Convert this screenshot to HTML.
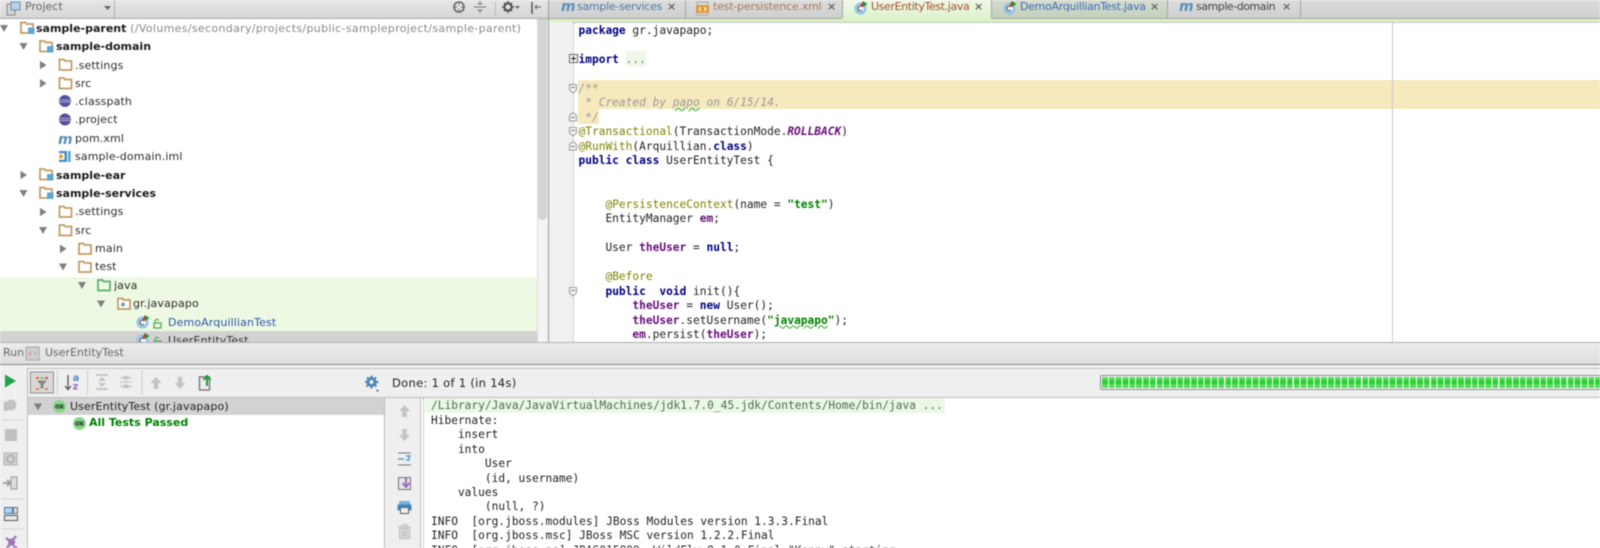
<!DOCTYPE html>
<html><head><meta charset="utf-8"><title>UserEntityTest</title>
<style>
html,body{margin:0;padding:0;background:#fff}
#r{position:relative;width:1600px;height:548px;overflow:hidden;background:#fff;filter:blur(.4px)}
#r div{position:absolute}
.t{position:absolute;white-space:pre;font:11px/18px "DejaVu Sans",sans-serif;color:#2c2c2c;letter-spacing:.12px}
.b{font-weight:bold;color:#1a1a1a;letter-spacing:0}
.g{color:#888;letter-spacing:.33px;font-weight:normal}
.x{color:#666;font-weight:bold}
.c{position:absolute;white-space:pre;font:11.2px/15px "DejaVu Sans Mono","Liberation Mono",monospace;color:#222;left:578.5px}
.k{color:#000080;font-weight:bold}
.a{color:#808000}
.f{color:#660e7a;font-weight:bold}
.s{color:#008000;font-weight:bold}
.m{color:#999;font-style:italic}
.w{text-decoration:underline wavy #2da52d .7px}
.o{position:absolute;white-space:pre;font:11.2px/15px "DejaVu Sans Mono","Liberation Mono",monospace;color:#222;left:431px}
svg{position:absolute;left:0;top:0}
</style></head><body>
<div id="r">
<!-- top bars -->
<div style="left:0;top:0;width:548px;height:18px;background:linear-gradient(#e6e6e6,#d6d6d6);border-bottom:1px solid #aaa"></div>
<div style="left:548px;top:0;width:1052px;height:18px;background:linear-gradient(#dcdcdc,#cfcfcf);border-bottom:1px solid #a8a8a8"></div>
<div style="left:842px;top:0;width:149px;height:19px;background:linear-gradient(#f0f8e8,#ddf2cc)"></div>
<div style="left:991px;top:0;width:176px;height:18px;background:linear-gradient(#d5dccf,#c4d0bc)"></div>
<div style="left:548px;top:19px;width:1052px;height:3px;background:#d8f2c4;border-bottom:1px solid #c8c8c8"></div>
<div style="left:114px;top:0;width:1px;height:18px;background:#b0b0b0"></div>
<div style="left:495px;top:2px;width:1px;height:14px;background:#bbb"></div>
<div style="left:548px;top:0;width:1px;height:18px;background:#999"></div>
<div style="left:685px;top:0;width:1px;height:18px;background:#a5a5a5"></div>
<div style="left:842px;top:0;width:1px;height:18px;background:#a5a5a5"></div>
<div style="left:991px;top:0;width:1px;height:18px;background:#a5a5a5"></div>
<div style="left:1167px;top:0;width:1px;height:18px;background:#a5a5a5"></div>
<div style="left:1300px;top:0;width:1px;height:18px;background:#a5a5a5"></div>

<span class="t" style="left:25px;top:-2px;color:#666;letter-spacing:0">Project</span>
<span class="t" style="left:577px;top:-2px;color:#4f78a8;letter-spacing:-.27px">sample-services</span>
<span class="t x" style="left:667px;top:-2px">×</span>
<span class="t" style="left:713px;top:-2px;color:#a87a5a;letter-spacing:-.2px">test-persistence.xml</span>
<span class="t x" style="left:827px;top:-2px">×</span>
<span class="t" style="left:871px;top:-2px;color:#a0522d;letter-spacing:-.37px">UserEntityTest.java</span>
<span class="t x" style="left:974px;top:-2px">×</span>
<span class="t" style="left:1020px;top:-2px;color:#3d6cb8;letter-spacing:-.3px">DemoArquillianTest.java</span>
<span class="t x" style="left:1150px;top:-2px">×</span>
<span class="t" style="left:1196px;top:-2px;color:#444;letter-spacing:-.46px">sample-domain</span>
<span class="t x" style="left:1282px;top:-2px">×</span>

<!-- tree -->
<div style="left:0;top:276.5px;width:537px;height:54px;background:#eef9e3"></div>
<div style="left:0;top:330.5px;width:537px;height:12px;background:#d2d2d2"></div>
<span class="t b" style="left:36px;top:20px">sample-parent <span class="g">(/Volumes/secondary/projects/public-sampleproject/sample-parent)</span></span>
<span class="t b" style="left:56px;top:38px">sample-domain</span>
<span class="t" style="left:75px;top:57px">.settings</span>
<span class="t" style="left:75px;top:75px">src</span>
<span class="t" style="left:75px;top:93px">.classpath</span>
<span class="t" style="left:75px;top:111px">.project</span>
<span class="t" style="left:75px;top:130px">pom.xml</span>
<span class="t" style="left:75px;top:148px">sample-domain.iml</span>
<span class="t b" style="left:56px;top:167px">sample-ear</span>
<span class="t b" style="left:56px;top:185px">sample-services</span>
<span class="t" style="left:75px;top:203px">.settings</span>
<span class="t" style="left:75px;top:222px">src</span>
<span class="t" style="left:95px;top:240px">main</span>
<span class="t" style="left:95px;top:258px">test</span>
<span class="t" style="left:114px;top:277px">java</span>
<span class="t" style="left:133px;top:295px">gr.javapapo</span>
<span class="t" style="left:168px;top:314px;color:#2a56b0">DemoArquillianTest</span>
<div style="left:0;top:330.5px;width:537px;height:12px;overflow:hidden"><span class="t" style="left:168px;top:1.5px;color:#333">UserEntityTest</span></div>

<!-- left scrollbar and gutter -->
<div style="left:537px;top:19px;width:11px;height:323px;background:#f4f4f4;border-left:1px solid #ddd;box-sizing:border-box"></div>
<div style="left:538px;top:19px;width:9px;height:201px;background:#d4d4d4;border-radius:0 0 4px 4px"></div>
<div style="left:548px;top:19px;width:1px;height:323px;background:#999"></div>
<div style="left:549px;top:22px;width:24px;height:320px;background:#f0f0f0"></div>
<div style="left:573px;top:22px;width:0;height:320px;border-left:1px dotted #aaa"></div>
<!-- editor -->
<div style="left:578px;top:80px;width:1022px;height:29px;background:#f5e9bd"></div>
<div style="left:578px;top:109px;width:21px;height:15px;background:#f5e9bd"></div>
<div style="left:626px;top:51px;width:20px;height:15px;background:#edf8e6"></div>
<div style="left:1392px;top:22px;width:1px;height:320px;background:#c8c8c8"></div>
<div style="left:642px;top:298px;width:1px;height:44px;background:#e4e4e4"></div>

<span class="c" style="top:22.5px"><span class="k">package</span> gr.javapapo;</span>
<span class="c" style="top:51.5px"><span class="k">import</span> <span style="color:#777">...</span></span>
<span class="c m" style="top:80.5px">/**</span>
<span class="c m" style="top:95px"> * Created by <span class="w">papo</span> on 6/15/14.</span>
<span class="c m" style="top:109.5px"> */</span>
<span class="c" style="top:124px"><span class="a">@Transactional</span>(TransactionMode.<i class="f">ROLLBACK</i>)</span>
<span class="c" style="top:138.5px"><span class="a">@RunWith</span>(Arquillian.<span class="k">class</span>)</span>
<span class="c" style="top:153px"><span class="k">public class</span> UserEntityTest {</span>
<span class="c" style="top:196.7px">    <span class="a">@PersistenceContext</span>(name = <span class="s">"test"</span>)</span>
<span class="c" style="top:211.2px">    EntityManager <span class="f">em</span>;</span>
<span class="c" style="top:240.2px">    User <span class="f">theUser</span> = <span class="k">null</span>;</span>
<span class="c" style="top:269.2px">    <span class="a">@Before</span></span>
<span class="c" style="top:283.7px">    <span class="k">public</span>  <span class="k">void</span> init(){</span>
<span class="c" style="top:298.2px">        <span class="f">theUser</span> = <span class="k">new</span> User();</span>
<span class="c" style="top:312.7px">        <span class="f">theUser</span>.setUsername(<span class="s">"<span class="w">javapapo</span>"</span>);</span>
<div style="left:549px;top:325px;width:1051px;height:17px;overflow:hidden;background:transparent"><span class="c" style="left:29.5px;top:2.2px">        <span class="f">em</span>.persist(<span class="f">theUser</span>);</span></div>

<!-- run panel -->
<div style="left:0;top:342px;width:1600px;height:22px;background:linear-gradient(#ececec,#dedede);border-top:1px solid #b0b0b0;box-sizing:border-box"></div>
<div style="left:0;top:364px;width:1600px;height:1px;background:#888"></div>
<div style="left:0;top:365px;width:1600px;height:183px;background:#efefef"></div>
<div style="left:27px;top:368px;width:1573px;height:1px;background:#c4c4c4"></div>
<div style="left:27px;top:368px;width:1px;height:180px;background:#bdbdbd"></div>
<span class="t" style="left:3px;top:344px;color:#666;letter-spacing:0">Run</span>
<span class="t" style="left:45px;top:344px;color:#666;letter-spacing:0">UserEntityTest</span>
<span class="t" style="left:392px;top:374px;color:#222;font-size:11.5px;letter-spacing:.3px">Done: 1 of 1 (in 14s)</span>

<div style="left:28px;top:397px;width:356px;height:151px;background:#fff"></div>
<div style="left:28px;top:397px;width:356px;height:18px;background:#d2d2d2"></div>
<div style="left:28px;top:397px;width:1572px;height:1px;background:#bdbdbd"></div>
<div style="left:384px;top:397px;width:1px;height:151px;background:#bbb"></div>
<div style="left:420px;top:398px;width:1180px;height:150px;background:#fff;border-left:1px solid #bbb;box-sizing:border-box"></div>
<div style="left:423px;top:398px;width:0;height:150px;border-left:1px dotted #999"></div>
<div style="left:425px;top:398px;width:520px;height:14.5px;background:#ecf8e6"></div>
<span class="t" style="left:70px;top:398px;color:#222">UserEntityTest (gr.javapapo)</span>
<span class="t b" style="left:89px;top:414px;color:#008000">All Tests Passed</span>

<span class="o" style="top:398.2px;color:#4e6e4e">/Library/Java/JavaVirtualMachines/jdk1.7.0_45.jdk/Contents/Home/bin/java ...</span>
<span class="o" style="top:412.7px">Hibernate:</span>
<span class="o" style="top:427.1px">    insert</span>
<span class="o" style="top:441.6px">    into</span>
<span class="o" style="top:456px">        User</span>
<span class="o" style="top:470.5px">        (id, username)</span>
<span class="o" style="top:484.9px">    values</span>
<span class="o" style="top:499.4px">        (null, ?)</span>
<span class="o" style="top:513.8px">INFO  [org.jboss.modules] JBoss Modules version 1.3.3.Final</span>
<span class="o" style="top:528.3px">INFO  [org.jboss.msc] JBoss MSC version 1.2.2.Final</span>
<span class="o" style="top:542.7px">INFO  [org.jboss.as] JBAS015899: WildFly 8.1.0.Final "Kenny" starting</span>

<!-- progress -->
<div style="left:1100px;top:375px;width:500px;height:15px;border:1px solid #888;border-right:0;box-sizing:border-box;background:#fff;border-radius:2px 0 0 2px"></div>
<div style="left:1102px;top:377px;width:498px;height:11px;background:repeating-linear-gradient(90deg,#55da5a 0,#55da5a 5.8px,#fff 5.8px,#fff 6.85px)"></div>
<div style="left:1102px;top:380px;width:498px;height:4px;background:repeating-linear-gradient(90deg,#2ad034 0,#2ad034 5.8px,#fff 5.8px,#fff 6.85px)"></div>

<svg width="1600" height="548" viewBox="0 0 1600 548">
<defs>
<g id="down"><path d="M-4-3.500h8L0 3.500z" fill="#808080"/></g>
<g id="right"><path d="M-3-4.300v8.600L3.500 0z" fill="#808080"/></g>
<g id="fo"><path d="M1 1.500h4.500l1 1.500H13V12H1z" fill="#fff" stroke="#c09a62" stroke-width="1.700"/></g>
<g id="mod"><path d="M1 1.500h4.500l1 1.500H13V12H1z" fill="#fff" stroke="#c09a62" stroke-width="1.700"/><rect x="8" y="6.500" width="6.500" height="6.500" fill="#5fa6d2"/></g>
<g id="ecl"><circle cx="6.500" cy="6.500" r="6" fill="#56519a"/><path d="M0 5.500h13M0 7.500h13" stroke="#c8d0f4" stroke-width=".8"/></g>
<g id="cls"><circle cx="6.500" cy="7.500" r="6" fill="#8ec4e8"/><circle cx="6.500" cy="7.500" r="3.600" fill="#e8f4fb"/><path d="M8 5.800a2.400 2.400 0 1 0 0 3.400" fill="none" stroke="#333" stroke-width="1"/><path d="M9 0v6l-3-1z" fill="#d33"/><path d="M9 0l4.500 3L9 6z" fill="#1a9a2a"/></g>
<g id="lock"><rect x="1" y="4" width="7" height="5" fill="none" stroke="#55a85a" stroke-width="1.300"/><path d="M2 4V2.200a2 2 0 0 1 3.800-.6" fill="none" stroke="#55a85a" stroke-width="1.200"/></g>
<g id="ok"><circle cx="6.500" cy="6.500" r="6.500" fill="#8bd68d"/><ellipse cx="6.500" cy="6.500" rx="4.800" ry="3" fill="#74b878"/><text x="6.500" y="8.500" text-anchor="middle" font-family="DejaVu Sans,sans-serif" font-weight="bold" font-size="5.500" fill="#1f3f22">OK</text></g>
<g id="mm"><text x="0" y="12" font-family="DejaVu Sans,sans-serif" font-style="italic" font-weight="bold" font-size="14" fill="#5c8fb4">m</text></g>
<g id="fold"><path d="M0.500 0.500h7v5.500l-3.500 3-3.500-3z" fill="#f4f4f4" stroke="#999"/><path d="M2 3.500h4" stroke="#777"/></g>
<g id="foldb"><path d="M4 0.500l3.500 3v5.500h-7V3.500z" fill="#f4f4f4" stroke="#999"/><path d="M2 5.500h4" stroke="#777"/></g>
<g id="upa"><path d="M0-6l5.500 6H2.200v6h-4.400V0H-5.500z" fill="#c4c4c4"/></g>
<g id="dna"><path d="M0 6l5.500-6H2.200v-6h-4.400v6H-5.500z" fill="#c4c4c4"/></g>
</defs>

<!-- top bar icons -->
<rect x="7" y="4" width="8" height="11" fill="#d4d4d4" stroke="#888"/><rect x="11" y="2" width="9" height="8" fill="#bcd0e4" stroke="#6d8aa8"/>
<path d="M104 6h7l-3.500 4z" fill="#666"/>
<circle cx="459" cy="7" r="5" fill="none" stroke="#666" stroke-width="1.600"/><path d="M459 2v3M459 9v3M454 7h3M461 7h3" stroke="#666"/>
<path d="M474 7h12M480 1v3.500M480 13V9.500M477.500 4h5M477.500 10h5" stroke="#777" stroke-width="1.100"/>
<circle cx="508" cy="7" r="3.600" fill="none" stroke="#555" stroke-width="2.200"/><path d="M508 1v2M508 11v2M502 7h2M512 7h2M504 3l1 1M511 10l1 1M512 3l-1 1M505 10l-1 1" stroke="#555" stroke-width="1.600"/>
<path d="M515 6h5l-2.500 3z" fill="#666"/>
<path d="M532 2v12" stroke="#555" stroke-width="1.500"/><path d="M535 7h6M535 7l2-2M535 7l2 2" stroke="#666" fill="none"/>

<!-- tab icons -->
<use href="#mm" x="561" y="-1"/>
<rect x="697" y="2" width="11" height="13" fill="#d8d8d8" stroke="#aaa"/><rect x="696" y="5" width="13" height="8" fill="#e09a3a"/><path d="M701 7l-2 2 2 2M704 7l2 2-2 2" stroke="#fff" fill="none"/>
<use href="#cls" x="854" y="1"/>
<use href="#cls" x="1003" y="1"/>
<use href="#mm" x="1179" y="-1"/>

<!-- tree arrows -->
<use href="#down" x="4" y="28.500"/>
<use href="#down" x="23.500" y="46.500"/>
<use href="#right" x="43" y="65"/>
<use href="#right" x="43" y="83.300"/>
<use href="#right" x="23.500" y="175"/>
<use href="#down" x="23.500" y="193.500"/>
<use href="#right" x="43" y="212"/>
<use href="#down" x="43" y="230.500"/>
<use href="#right" x="63" y="248.800"/>
<use href="#down" x="63" y="267"/>
<use href="#down" x="82" y="285.500"/>
<use href="#down" x="101" y="304"/>
<!-- tree icons -->
<use href="#mod" x="20" y="21"/>
<use href="#mod" x="39" y="39.500"/>
<use href="#fo" x="58.500" y="58"/>
<use href="#fo" x="58.500" y="76.500"/>
<use href="#ecl" x="58.500" y="94.500"/>
<use href="#ecl" x="58.500" y="113"/>
<use href="#mm" x="58" y="132"/>
<path d="M59 151h8v11h-8v-2.200h5.500v-6.600H59z" fill="#3e8fc4"/><circle cx="61" cy="156.500" r="2" fill="#e89a2a"/><rect x="68" y="151" width="2.700" height="11" fill="#5ea6d6"/>
<use href="#mod" x="39" y="167.500"/>
<use href="#mod" x="39" y="186"/>
<use href="#fo" x="58.500" y="205"/>
<use href="#fo" x="58.500" y="223.500"/>
<use href="#fo" x="78" y="242"/>
<use href="#fo" x="78" y="260"/>
<path d="M98 280h4.500l1 1.500h6.500v9H98z" fill="#eef9e3" stroke="#5dac66" stroke-width="1.700"/>
<use href="#fo" x="117" y="297"/><circle cx="123" cy="304.500" r="2" fill="#5fa6d2"/>
<use href="#cls" x="136" y="315"/>
<use href="#lock" x="153" y="319"/>
<g><svg x="130" y="330" width="40" height="12" viewBox="130 330 40 12" style="position:static"><use href="#cls" x="136" y="333"/><use href="#lock" x="153" y="337"/></svg></g>

<!-- gutter folds -->
<rect x="569.500" y="54.500" width="8" height="8" fill="#f8f8f8" stroke="#666"/><path d="M571 58.500h5M573.500 56v5" stroke="#222"/>
<use href="#fold" x="569" y="84"/>
<use href="#foldb" x="569" y="112"/>
<use href="#fold" x="569" y="127"/>
<use href="#foldb" x="569" y="141"/>
<use href="#fold" x="569" y="287"/>

<!-- run title icon -->
<rect x="26" y="347" width="13" height="13" fill="#cfcfcf" stroke="#a8a8a8"/><path d="M28 353.500l3-2.500v5z" fill="#e49a9a"/><path d="M37 353.500l-3-2.500v5z" fill="#9ad09a"/>

<!-- left toolbar -->
<path d="M5 374.500l11 6.500-11 6.500z" fill="#1fa34a"/>
<path d="M4 401l5 3v6l-5 1z" fill="#bbb"/><circle cx="11" cy="405" r="5.500" fill="#c4c4c4"/>
<path d="M2 420h22" stroke="#aaa" stroke-dasharray="1 1.500"/>
<rect x="5" y="429" width="12" height="12" fill="#c0c0c0"/>
<rect x="4" y="453" width="13" height="12" fill="#d2d2d2" stroke="#b0b0b0"/><circle cx="10.500" cy="459" r="3.600" fill="none" stroke="#aaa" stroke-width="1.500"/>
<path d="M3 483h7M7 480l3.500 3-3.500 3" stroke="#999" stroke-width="1.700" fill="none"/><rect x="11" y="477" width="6" height="12" fill="#ddd" stroke="#999"/>
<path d="M2 499h22" stroke="#aaa" stroke-dasharray="1 1.500"/>
<rect x="4.500" y="507.500" width="8" height="6" fill="#b4d4ec" stroke="#3d7cb0"/><rect x="13.500" y="507.500" width="4" height="6" fill="#ddd" stroke="#777"/><rect x="4.500" y="515.500" width="13" height="5" fill="#e8e8e8" stroke="#555"/>
<path d="M2 529h22" stroke="#aaa" stroke-dasharray="1 1.500"/>
<circle cx="11.500" cy="542" r="3.500" fill="#8e6ab0"/><path d="M7 548l9-12M6 538l4 3M13 546l4 2" stroke="#a07cc0" stroke-width="2.500"/>

<!-- test toolbar -->
<rect x="30.500" y="372" width="23" height="21" fill="#d8d8d8" stroke="#909090"/>
<path d="M36 378h3" stroke="#e0703a" stroke-width="2"/><path d="M40.500 378h3" stroke="#7ac07a" stroke-width="2"/><path d="M45 378h3" stroke="#e05a3a" stroke-width="2"/><path d="M36 389h3M45 389h3" stroke="#e8804a" stroke-width="2"/><path d="M37 380.500h10l-3.500 4v4h-3v-4z" fill="#888"/>
<path d="M57.500 371v24" stroke="#999" stroke-dasharray="1 1.500"/>
<path d="M68 375v14M65 386l3 3.500 3-3.500" stroke="#555" stroke-width="1.300" fill="none"/>
<text x="72.500" y="381" font-family="DejaVu Sans,sans-serif" font-size="10" font-weight="bold" fill="#4d8fc4">a</text><text x="72.500" y="389.500" font-family="DejaVu Sans,sans-serif" font-size="10" font-weight="bold" fill="#9d6cc0">z</text>
<path d="M87.500 371v24" stroke="#999" stroke-dasharray="1 1.500"/>
<path d="M96 375h12M96 389h12" stroke="#bbb" stroke-width="1.600"/><path d="M102 377l-4 4h8zM102 387l-4-4h8z" fill="#c4c4c4"/>
<path d="M120 382h12M120 378h12M120 386h12" stroke="#c4c4c4" stroke-width="1.200"/><path d="M126 381l-3.500-5h7zM126 383l-3.500 5h7z" fill="#c4c4c4"/>
<path d="M142 371v24" stroke="#999" stroke-dasharray="1 1.500"/>
<use href="#upa" x="156" y="383"/>
<use href="#dna" x="180" y="383"/>
<rect x="199.500" y="377" width="10" height="13" fill="#eee" stroke="#777" stroke-width="1.400"/><path d="M207 386v-9M203.500 380l3.500-4 3.500 4" stroke="#1f9a3a" stroke-width="2" fill="none"/>

<circle cx="371.500" cy="382" r="3.500" fill="none" stroke="#4a88b8" stroke-width="3"/><path d="M371.500 375.500v2.500M371.500 386v2.500M365 382h2.500M376 382h2.500M367 377.500l1.500 1.500M375 385l1.500 1.500M376 377.500l-1.500 1.500M368 385l-1.500 1.500" stroke="#4a88b8" stroke-width="2"/>
<path d="M376 390h3l-1.500 2z" fill="#555"/>

<!-- test tree -->
<use href="#down" x="38" y="407"/>
<use href="#ok" x="53" y="400"/>
<use href="#ok" x="73" y="417"/>

<!-- console strip -->
<use href="#upa" x="404.500" y="411"/>
<use href="#dna" x="404.500" y="435"/>
<path d="M398 453h13M398 465h13" stroke="#777"/><path d="M398 459h6M409 457v3h-3M406 456h5" stroke="#3f8fc8" stroke-width="1.300" fill="none"/>
<rect x="398.500" y="477.500" width="12" height="12" fill="#e4e4e4" stroke="#777"/><path d="M406 477v9M402.500 483l3.500 4 3.500-4" stroke="#9a6cc4" stroke-width="2" fill="none"/>
<rect x="399" y="501" width="11" height="4" fill="#7ab0d8"/><rect x="397.500" y="504.500" width="14" height="6" fill="#3d88c0"/><rect x="400.500" y="507.500" width="8" height="6" fill="#eee" stroke="#666"/>
<path d="M398 527h13M402 527v-2h5v2" stroke="#c0c0c0" stroke-width="1.200" fill="none"/><rect x="399.500" y="528.500" width="10" height="10" fill="#ddd" stroke="#bbb"/><path d="M402.500 530v7M404.500 530v7M406.500 530v7" stroke="#bbb"/>
</svg>
</div>
</body></html>
